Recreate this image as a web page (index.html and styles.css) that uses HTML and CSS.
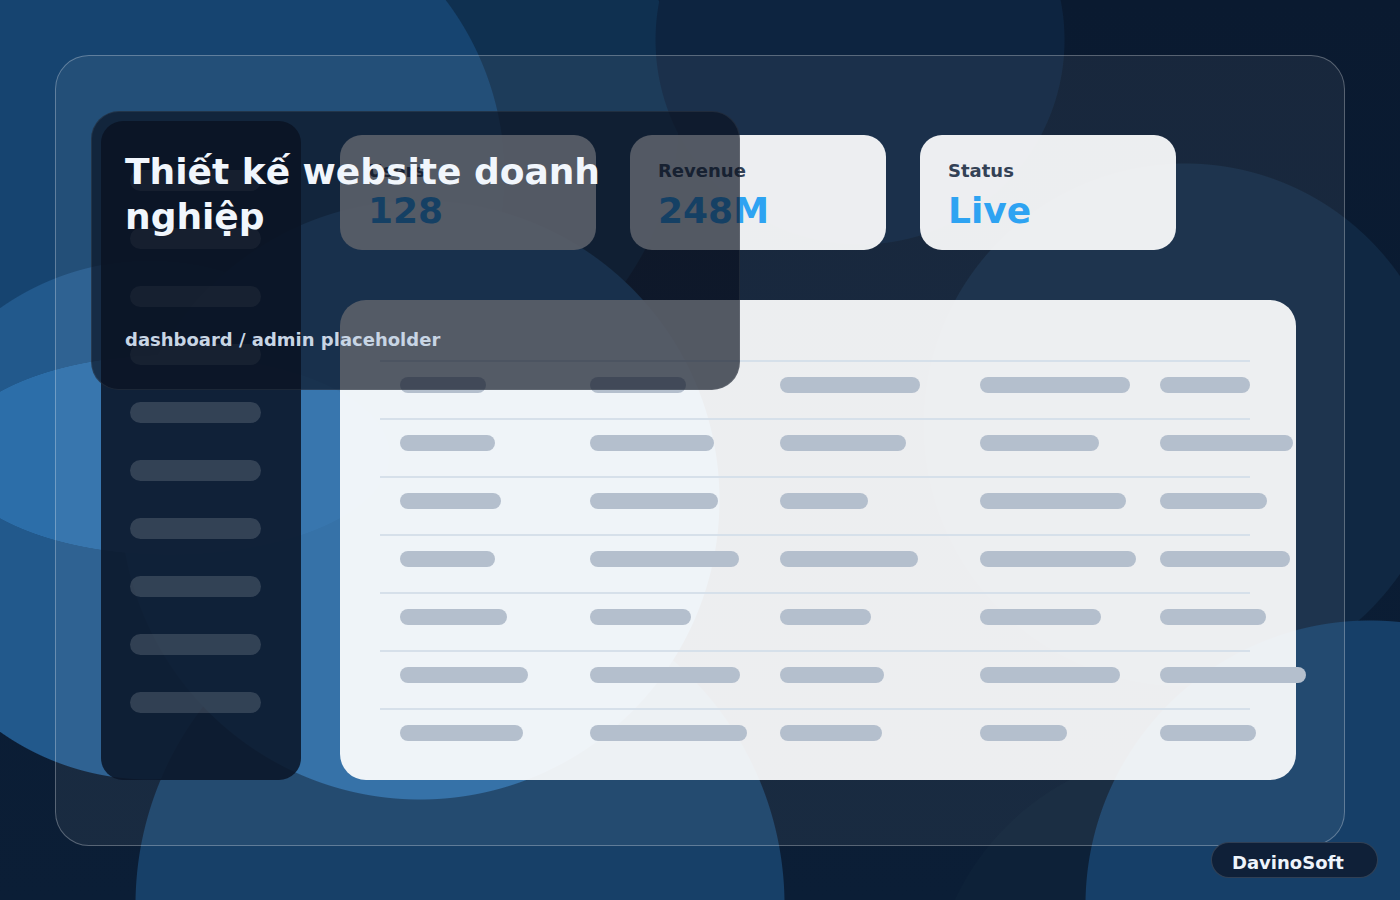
FILE: index.html
```html
<!DOCTYPE html>
<html lang="vi">
<head>
    <meta charset="UTF-8">
    <meta name="viewport" content="width=device-width, initial-scale=1.0">
    <title>Thiết kế website doanh nghiệp</title>
    <link rel="stylesheet" href="styles.css">
</head>
<body>
    <div class="stage">
        <div class="frame">
            <!-- sidebar menu placeholder -->
            <aside class="sidebar">
                <div class="side-item"></div>
                <div class="side-item"></div>
                <div class="side-item"></div>
                <div class="side-item"></div>
                <div class="side-item"></div>
                <div class="side-item"></div>
                <div class="side-item"></div>
                <div class="side-item"></div>
                <div class="side-item"></div>
                <div class="side-item"></div>
            </aside>

            <main class="main">
                <div class="stats">
                    <div class="stat-card">
                        <p class="stat-label">Users</p>
                        <p class="stat-value">128</p>
                    </div>
                    <div class="stat-card">
                        <p class="stat-label">Revenue</p>
                        <p class="stat-value">248M</p>
                    </div>
                    <div class="stat-card">
                        <p class="stat-label">Status</p>
                        <p class="stat-value">Live</p>
                    </div>
                </div>

                <div class="table-panel">
                    <div class="row">
                        <span class="cell" style="width: 86px"></span>
                        <span class="cell" style="width: 96px"></span>
                        <span class="cell" style="width: 140px"></span>
                        <span class="cell" style="width: 150px"></span>
                        <span class="cell" style="width: 90px"></span>
                    </div>
                    <div class="row">
                        <span class="cell" style="width: 95px"></span>
                        <span class="cell" style="width: 124px"></span>
                        <span class="cell" style="width: 126px"></span>
                        <span class="cell" style="width: 119px"></span>
                        <span class="cell" style="width: 133px"></span>
                    </div>
                    <div class="row">
                        <span class="cell" style="width: 101px"></span>
                        <span class="cell" style="width: 128px"></span>
                        <span class="cell" style="width: 88px"></span>
                        <span class="cell" style="width: 146px"></span>
                        <span class="cell" style="width: 107px"></span>
                    </div>
                    <div class="row">
                        <span class="cell" style="width: 95px"></span>
                        <span class="cell" style="width: 149px"></span>
                        <span class="cell" style="width: 138px"></span>
                        <span class="cell" style="width: 156px"></span>
                        <span class="cell" style="width: 130px"></span>
                    </div>
                    <div class="row">
                        <span class="cell" style="width: 107px"></span>
                        <span class="cell" style="width: 101px"></span>
                        <span class="cell" style="width: 91px"></span>
                        <span class="cell" style="width: 121px"></span>
                        <span class="cell" style="width: 106px"></span>
                    </div>
                    <div class="row">
                        <span class="cell" style="width: 128px"></span>
                        <span class="cell" style="width: 150px"></span>
                        <span class="cell" style="width: 104px"></span>
                        <span class="cell" style="width: 140px"></span>
                        <span class="cell" style="width: 146px"></span>
                    </div>
                    <div class="row">
                        <span class="cell" style="width: 123px"></span>
                        <span class="cell" style="width: 157px"></span>
                        <span class="cell" style="width: 102px"></span>
                        <span class="cell" style="width: 87px"></span>
                        <span class="cell" style="width: 96px"></span>
                    </div>
                </div>
            </main>

            <!-- title card sits over the dashboard -->
            <div class="hero">
                <h1>Thiết kế website doanh nghiệp</h1>
                <p class="hero-sub">dashboard / admin placeholder</p>
            </div>
        </div>

        <div class="brand">DavinoSoft</div>
    </div>
</body>
</html>
```

FILE: styles.css
```css
* {
    box-sizing: border-box;
}

body {
    margin: 0;
    font-family: 'DejaVu Sans', 'Noto Sans', sans-serif;
    background-color: #08111f;
    overflow: hidden;
}

.stage {
    position: relative;
    width: 1400px;
    height: 900px;
    padding: 55px;
    background:
        radial-gradient(ellipse 220px 100px at 170px 455px, #2c6ea9 99.5%, transparent 100%),
        radial-gradient(circle 300px at 420px 500px, #2a6aa3 299px, transparent 300px),
        radial-gradient(circle 325px at 460px 905px, #174068 324px, transparent 325px),
        radial-gradient(circle 260px at 150px 520px, #22598c 259px, transparent 260px),
        radial-gradient(circle 285px at 1370px 905px, #163f68 284px, transparent 285px),
        radial-gradient(circle 262px at 1185px 425px, #102843 261px, transparent 262px),
        radial-gradient(circle 260px at 1190px 1010px, #0d2138 259px, transparent 260px),
        radial-gradient(circle 205px at 860px 40px, #0d2440 204px, transparent 205px),
        radial-gradient(circle 290px at 215px 175px, #164470 289px, transparent 290px),
        radial-gradient(circle 300px at 380px 110px, #0f3050 299px, transparent 300px),
        linear-gradient(#0a1a30, #0b1e36);
}

.frame {
    position: relative;
    height: 791px;
    display: grid;
    grid-template-columns: 200px 1fr;
    gap: 39px;
    padding: 65px 49px 65px 45px;
    border: 1px solid rgba(255, 255, 255, 0.28);
    border-radius: 34px;
    background-color: rgba(255, 255, 255, 0.06);
}

.sidebar {
    display: flex;
    flex-direction: column;
    gap: 37px;
    padding: 49px 0 0 29px;
    border-radius: 22px;
    background-color: rgba(10, 22, 40, 0.88);
}

.side-item {
    width: 131px;
    height: 21px;
    border-radius: 11px;
    background-color: rgba(255, 255, 255, 0.15);
}

.main {
    padding-top: 14px;
}

.stats {
    display: flex;
    gap: 34px;
}

.stat-card {
    width: 256px;
    height: 115px;
    padding: 25px 28px 0;
    border-radius: 22px;
    background-color: rgba(255, 255, 255, 0.92);
}

.stat-label {
    margin: 0 0 8px;
    font-size: 18px;
    line-height: 22px;
    font-weight: bold;
    color: #334155;
}

.stat-value {
    margin: 0;
    font-size: 36px;
    line-height: 42px;
    font-weight: bold;
    color: #2ea3f2;
}

.table-panel {
    height: 480px;
    margin-top: 50px;
    padding: 60px 46px 0 40px;
    border-radius: 26px;
    background-color: rgba(255, 255, 255, 0.92);
}

.row {
    display: grid;
    grid-template-columns: 190px 190px 200px 180px 90px;
    height: 58px;
    padding: 15px 0 0 20px;
    border-top: 2px solid #d6e0ea;
}

.cell {
    height: 16px;
    border-radius: 8px;
    background-color: #b4bfcd;
}

.hero {
    position: absolute;
    left: 35px;
    top: 55px;
    width: 649px;
    height: 279px;
    display: flex;
    flex-direction: column;
    justify-content: space-between;
    padding: 37px 34px 39px 33px;
    border: 1px solid rgba(255, 255, 255, 0.07);
    border-radius: 28px;
    background-color: rgba(11, 18, 32, 0.68);
}

.hero h1 {
    margin: 0;
    font-size: 36px;
    line-height: 45px;
    font-weight: bold;
    color: #f1f6fc;
}

.hero-sub {
    margin: 0;
    font-size: 18px;
    line-height: 21px;
    font-weight: bold;
    color: #c8d5e4;
}

.brand {
    position: absolute;
    right: 22px;
    bottom: 22px;
    width: 167px;
    height: 36px;
    padding: 6px 20px 0;
    border: 1px solid rgba(255, 255, 255, 0.14);
    border-radius: 18px;
    background-color: #0f2038;
    font-size: 18px;
    line-height: 28px;
    font-weight: bold;
    color: #eef4fb;
}
```
